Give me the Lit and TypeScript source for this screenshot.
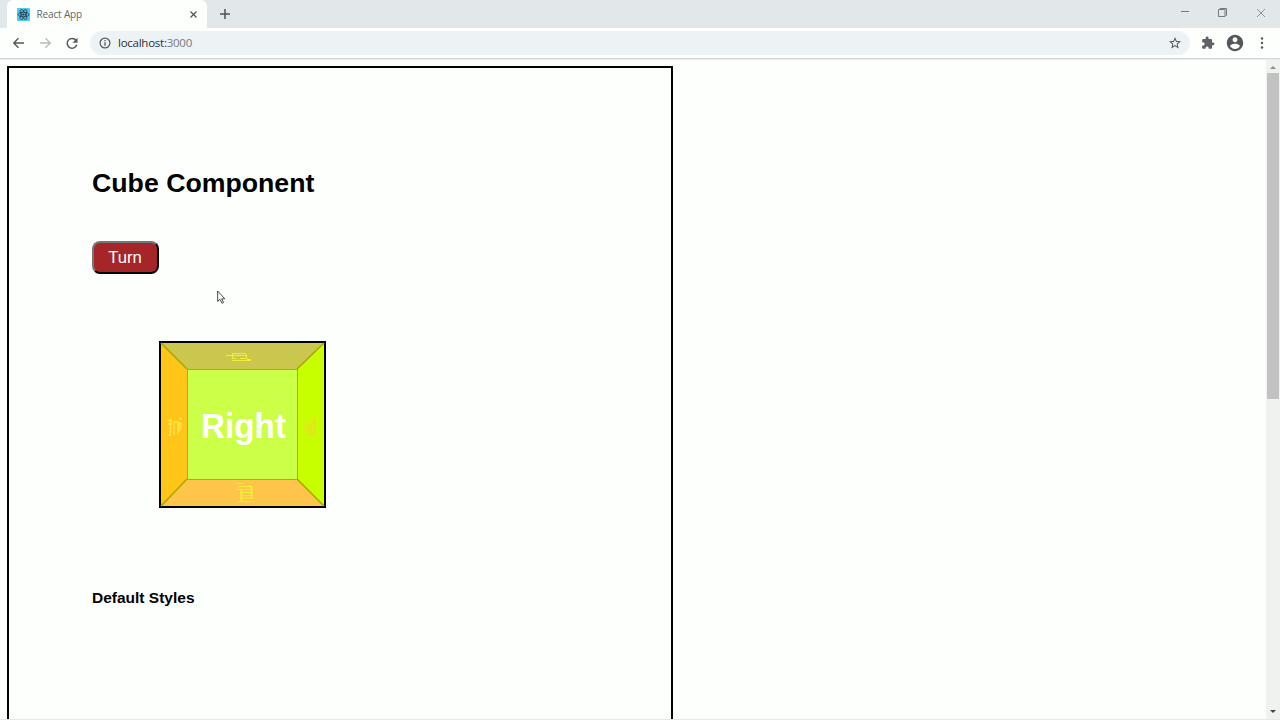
import { LitElement, html, css } from "lit";
import { customElement } from "lit/decorators.js";

@customElement("browser-chrome")
class BrowserChrome extends LitElement {
  static styles = css`
    :host { display: block; height: 60px; font-family: "Noto Sans", sans-serif; background: #fdfffd; flex: none; }
    svg { display: block; flex: none; }
    .tabs { height: 28px; background: #e2e7ea; display: flex; box-sizing: border-box; padding-left: 7px; }
    .tab { width: 200px; height: 28px; background: #fdfffd; border-radius: 6px 6px 0 0; display: flex; align-items: center; box-sizing: border-box; padding: 0 9px 0 10px; }
    .title { margin-left: 6.500px; font-family: "Open Sans", sans-serif; font-size: 10px; line-height: 14px; color: #62666a; flex: 1; letter-spacing: -0.150px; }
    .plus { margin: 8px 0 0 12px; }
    .wins { margin-left: auto; display: flex; align-items: flex-start; padding: 8px 14px 0 0; gap: 28px; }
    .bar { height: 30px; display: flex; align-items: center; box-sizing: border-box; padding: 0 11px 0 12px; }
    .bar .nav { margin-right: 14px; }
    .bar .reload { margin-right: 11px; }
    .omni { height: 24px; width: 1100px; border-radius: 12px; background: #edf2f5; display: flex; align-items: center; box-sizing: border-box; padding: 0 9px; }
    .url { flex: 1; margin-left: 7px; font-family: "Open Sans", sans-serif; font-size: 11.500px; line-height: 16px; color: #2c3034; letter-spacing: -0.250px; }
    .port { color: #747b80; }
    .puzzle { margin-left: 11px; }
    .user { margin-left: 11px; }
    .dots { margin-left: auto; }
    .line { height: 2px; background: linear-gradient(#d2d5d9 50%, #e9ecee 50%); }
  `;
  render() {
    return html`
      <div class="tabs">
        <div class="tab">
          <svg width="13" height="13" viewBox="0 0 13 13"><rect width="13" height="13" rx="1" fill="#55c8ee"/><g fill="none" stroke="#203542" stroke-width=".8"><ellipse cx="6.5" cy="6.5" rx="5.5" ry="2.2"/><ellipse cx="6.5" cy="6.5" rx="5.5" ry="2.2" transform="rotate(60 6.5 6.5)"/><ellipse cx="6.5" cy="6.5" rx="5.5" ry="2.2" transform="rotate(120 6.5 6.5)"/></g><circle cx="6.5" cy="6.5" r="1.1" fill="#203542"/></svg>
          <span class="title">React App</span>
          <svg width="9" height="9" viewBox="0 0 9 9"><path d="M1.5 1.5l6 6M7.5 1.5l-6 6" stroke="#4d5155" stroke-width="1.2"/></svg>
        </div>
        <svg class="plus" width="12" height="12" viewBox="0 0 12 12"><path d="M6 1v10M1 6h10" stroke="#4d5155" stroke-width="1.5"/></svg>
        <div class="wins">
          <svg width="10" height="9" viewBox="0 0 10 9"><path d="M1 3.5h8" stroke="#777b7e"/></svg>
          <svg width="10" height="10" viewBox="0 0 10 10"><path d="M.5 1.500h6.500v7h-6.500zM2 1.500V.5h6.500v7H7.500" fill="none" stroke="#777b7e"/></svg>
          <svg width="10" height="10" viewBox="0 0 10 10"><path d="M1 1l8 8M9 1l-8 8" stroke="#85898c" stroke-width=".9"/></svg>
        </div>
      </div>
      <div class="bar">
        <svg class="nav" width="13" height="12" viewBox="0 0 13 12"><path d="M12 6H2M6.500 1.300L1.800 6l4.700 4.700" fill="none" stroke="#54585c" stroke-width="1.400"/></svg>
        <svg class="nav" width="13" height="12" viewBox="0 0 13 12"><path d="M1 6h10M6.500 1.300L11.200 6l-4.700 4.700" fill="none" stroke="#b9bcbe" stroke-width="1.400"/></svg>
        <svg class="reload" width="13" height="13" viewBox="0.500 0 13 13"><path d="M10.500 3.300A4.900 4.900 0 1 0 11.300 7.800" fill="none" stroke="#54585c" stroke-width="1.500"/><path d="M12 .8v5H7z" fill="#54585c"/></svg>
        <div class="omni">
          <svg width="12" height="12" viewBox="0 0 12 12"><circle cx="6" cy="6" r="4.900" fill="none" stroke="#54585c" stroke-width="1.200"/><path d="M6 5.200v3.500M6 3v1.300" stroke="#54585c" stroke-width="1.300"/></svg>
          <span class="url">localhost:<span class="port">3000</span></span>
          <svg width="12" height="12" viewBox="2 2 20 20"><path fill="#54585c" d="M22 9.240l-7.190-.62L12 2 9.190 8.630 2 9.240l5.460 4.730L5.820 21 12 17.270 18.180 21l-1.630-7.030L22 9.240zM12 15.400l-3.760 2.270 1-4.280-3.320-2.880 4.380-.38L12 6.100l1.710 4.040 4.380.38-3.320 2.880 1 4.280L12 15.400z"/></svg>
        </div>
        <svg class="puzzle" width="14" height="14" viewBox="0 0 24 24"><path fill="#5f6368" d="M20.500 11H19V7c0-1.100-.9-2-2-2h-4V3.500a2.500 2.500 0 0 0-5 0V5H4c-1.100 0-2 .9-2 2v3.800h1.500a2.700 2.700 0 0 1 0 5.400H2V20c0 1.100.9 2 2 2h3.800v-1.500a2.700 2.700 0 0 1 5.400 0V22H17c1.100 0 2-.9 2-2v-4h1.500a2.500 2.500 0 0 0 0-5z"/></svg>
        <svg class="user" width="18" height="18" viewBox="1 1 22 22"><path fill="#54585c" d="M12 2C6.480 2 2 6.480 2 12s4.480 10 10 10 10-4.480 10-10S17.520 2 12 2zm0 3c1.660 0 3 1.340 3 3s-1.340 3-3 3-3-1.340-3-3 1.340-3 3-3zm0 14.200c-2.500 0-4.710-1.280-6-3.220.03-1.990 4-3.080 6-3.080 1.990 0 5.970 1.090 6 3.080-1.290 1.940-3.500 3.220-6 3.220z"/></svg>
        <svg class="dots" width="14" height="14" viewBox="0 0 14 14"><g fill="#54585c"><circle cx="7" cy="2.500" r="1.200"/><circle cx="7" cy="7" r="1.200"/><circle cx="7" cy="11.500" r="1.200"/></g></svg>
      </div>
      <div class="line"></div>
    `;
  }
}

@customElement("cube-view")
class CubeView extends LitElement {
  static styles = css`
    :host { display: block; width: 167px; height: 167px; }
    svg { display: block; }
    .name { font: bold 34.500px "Liberation Sans", sans-serif; fill: #fff; }
  `;
  render() {
    return html`<svg width="167" height="167" viewBox="0 0 167 167">
      <rect width="167" height="167" fill="#000"/>
      <path d="M2 2H165L138 28H28z" fill="#cbc64d"/>
      <path d="M2 2L28 28V145L2 165z" fill="#ffc518"/>
      <path d="M165 2V165L138 138V28z" fill="#c8ff00"/>
      <path d="M2 165L28 138H138L165 165z" fill="#ffc54a"/>
      <rect x="28.500" y="28.500" width="110" height="110" fill="#cbff48" stroke="#b5a818"/>
      <path d="M2 2L28 28M165 2L138 28M2 165L28 138M165 165L138 138" stroke="#aaa90a" stroke-width="1.700"/>
      <g stroke="#f2ee35" fill="none">
        <path d="M67 14.500h21M73 12.500h14M73.500 13v5M87.500 13v5M73 17.500h4M81 17.500h6M73 19.500h19M88 18.500h4" stroke-width="1.200"/>
        <path d="M146 83h4v4h-4zM146 94h4v-4h-3M152 94l4-3v-15M156 80l-4 4v9M152 87h4M150 94h7M151 81l3-2" stroke="#f0da30" stroke-width="1.200"/>
        <path d="M77 142.500h8M79 145.500h14M77 148.500h17M81 151.500h13M81 154.500h13M81 157h13M79 160.500h17" stroke-width="1.200"/>
        <path d="M82.500 148v12M92.500 145v13" stroke-width="2"/>
        <path d="M65 91V81h8l3 3M89 91.500h9" opacity=".45" stroke-width="2"/>
      </g>
      <path d="M8 79.500h5M9 83h4M11.500 78v17M9 94h3M15 80v14M15 81h4v12M20 82v9M20 82h2v7M20 78h3M22.500 76v3" stroke="#ffe348" stroke-width="1.300" fill="none"/>
      <text class="name" x="42" y="97" textLength="85" lengthAdjust="spacingAndGlyphs">Right</text>
    </svg>`;
  }
}

@customElement("app-root")
class AppRoot extends LitElement {
  static styles = css`
    :host { display: flex; flex-direction: column; width: 1280px; height: 720px; overflow: hidden; position: relative; background: #fdfffd; font-family: "Liberation Sans", Arial, sans-serif; }
    .view { flex: 1; min-height: 0; display: flex; justify-content: space-between; }
    .page { box-sizing: border-box; width: 666px; margin: 6px 0 0 7px; border: 2px solid #000; border-bottom: 0; padding: 99px 83px 0; overflow: hidden; }
    h1 { margin: 0; font-size: 26.700px; line-height: 32px; color: #000; white-space: nowrap; }
    .turn { display: block; box-sizing: border-box; width: 67px; height: 33px; margin: 42px 0 0; padding: 0 1px 0 0; border: 2px outset #000; border-color: #767676 #171010 #100808 #767676; border-radius: 8px; background: #a52528; color: #fff; font: 16.700px "Liberation Sans", Arial, sans-serif; }
    cube-view { margin: 67px 0 0 67px; }
    h4 { margin: 80px 0 0; font-size: 15.500px; line-height: 20px; white-space: nowrap; }
    .scroll { width: 14px; background: #f0f2f0; display: flex; flex-direction: column; align-items: center; }
    .thumb { width: 12px; height: 326px; background: #c1c2c1; }
    .down { margin-top: auto; }
    svg { display: block; }
    .cursor { position: absolute; left: 217px; top: 290px; }
    .edge { height: 1px; background: #e4e9eb; flex: none; }
  `;
  render() {
    return html`
      <browser-chrome></browser-chrome>
      <div class="view">
        <main class="page">
          <h1>Cube Component</h1>
          <button class="turn">Turn</button>
          <cube-view></cube-view>
          <h4>Default Styles</h4>
        </main>
        <div class="scroll">
          <svg width="14" height="13" viewBox="0 0 14 13"><path d="M4 9l3-3 3 3z" fill="#8b8d8b"/></svg>
          <div class="thumb"></div>
          <svg class="down" width="14" height="13" viewBox="0 0 14 13"><path d="M4 4l3 3 3-3z" fill="#444"/></svg>
        </div>
      </div>
      <div class="edge"></div>
      <svg class="cursor" width="10" height="15" viewBox="0 0 10 15"><path d="M.7 1v10.500l2.300-2.200 2 4 1.500-.8-1.800-3.700h3.100z" fill="#fff" stroke="#333" stroke-width=".9"/></svg>
    `;
  }
}
